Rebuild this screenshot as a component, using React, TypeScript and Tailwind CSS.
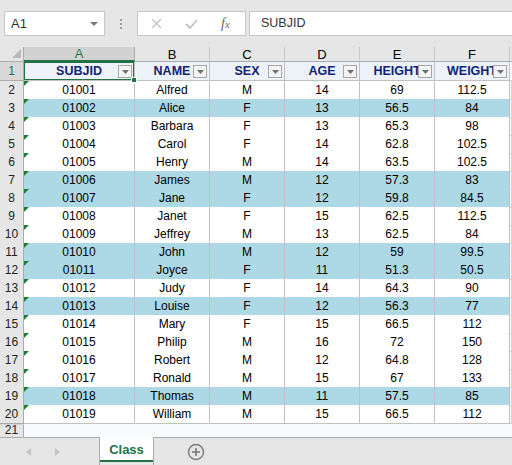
import { Fragment } from "react";

const rows: [string, string, string, string, string, string, boolean][] = [
  ["01001", "Alfred", "M", "14", "69", "112.5", false],
  ["01002", "Alice", "F", "13", "56.5", "84", true],
  ["01003", "Barbara", "F", "13", "65.3", "98", false],
  ["01004", "Carol", "F", "14", "62.8", "102.5", false],
  ["01005", "Henry", "M", "14", "63.5", "102.5", false],
  ["01006", "James", "M", "12", "57.3", "83", true],
  ["01007", "Jane", "F", "12", "59.8", "84.5", true],
  ["01008", "Janet", "F", "15", "62.5", "112.5", false],
  ["01009", "Jeffrey", "M", "13", "62.5", "84", false],
  ["01010", "John", "M", "12", "59", "99.5", true],
  ["01011", "Joyce", "F", "11", "51.3", "50.5", true],
  ["01012", "Judy", "F", "14", "64.3", "90", false],
  ["01013", "Louise", "F", "12", "56.3", "77", true],
  ["01014", "Mary", "F", "15", "66.5", "112", false],
  ["01015", "Philip", "M", "16", "72", "150", false],
  ["01016", "Robert", "M", "12", "64.8", "128", false],
  ["01017", "Ronald", "M", "15", "67", "133", false],
  ["01018", "Thomas", "M", "11", "57.5", "85", true],
  ["01019", "William", "M", "15", "66.5", "112", false],
];

const headers = ["SUBJID", "NAME", "SEX", "AGE", "HEIGHT", "WEIGHT"];
const letters = ["A", "B", "C", "D", "E", "F"];
const grid = "grid grid-cols-[24px_111px_75px_75px_75px_75px_75px_1fr]";

function FilterButton() {
  return (
    <div className="absolute right-[2px] top-[3px] z-10 flex h-[13px] w-[14px] items-center justify-center border border-[#a6a6a6] bg-[#f4f4f4]">
      <svg width="7" height="4" viewBox="0 0 7 4">
        <polygon points="0,0 7,0 3.5,4" fill="#707070" />
      </svg>
    </div>
  );
}

function TextFlag() {
  return (
    <svg className="absolute left-0 top-0" width="5" height="5" viewBox="0 0 5 5">
      <polygon points="0,0 5,0 0,5" fill="#1e7b34" />
    </svg>
  );
}

export default function App() {
  return (
    <div className="flex h-[465px] w-[512px] flex-col overflow-hidden bg-[#e6e6e6] font-['Liberation_Sans',Arial,sans-serif] text-[12px] text-black">
      {/* formula bar */}
      <div className="flex h-[47px] shrink-0 items-start pt-[11px] pl-[4px]">
        <div className="flex h-[25px] w-[101px] items-center justify-between border border-[#c6c6c6] bg-white pl-[6px] pr-[6px] text-[13px] text-[#333]">
          <span>A1</span>
          <svg width="8" height="4" viewBox="0 0 8 4">
            <polygon points="0,0 8,0 4,4" fill="#777" />
          </svg>
        </div>
        <div className="flex h-[25px] w-[32px] flex-col items-center justify-center gap-[2px]">
          <span className="h-[2px] w-[2px] bg-[#a0a0a0]" />
          <span className="h-[2px] w-[2px] bg-[#a0a0a0]" />
          <span className="h-[2px] w-[2px] bg-[#a0a0a0]" />
        </div>
        <div className="flex h-[25px] w-[109px] items-center border border-[#c6c6c6] bg-white">
          <svg className="ml-[13px]" width="11" height="11" viewBox="0 0 11 11">
            <path d="M1 1 L10 10 M10 1 L1 10" stroke="#c2c2c2" strokeWidth="1.4" />
          </svg>
          <svg className="ml-[23px]" width="13" height="10" viewBox="0 0 13 10">
            <path d="M1 5 L5 9 L12 1" stroke="#c2c2c2" strokeWidth="1.8" fill="none" />
          </svg>
          <span className="ml-[23px] font-['Liberation_Serif',serif] text-[14px] italic text-[#666]">
            f<span className="text-[11px]">x</span>
          </span>
        </div>
        <div className="ml-[3px] flex h-[25px] flex-1 items-center border border-r-0 border-[#c6c6c6] bg-white pl-[11px] text-[12.5px] text-[#333]">
          SUBJID
        </div>
      </div>

      {/* sheet */}
      <div className="flex flex-1 flex-col overflow-hidden bg-white">
        {/* column headers */}
        <div className={`${grid} h-[15px] shrink-0 bg-[#e6e6e6]`}>
          <div className="relative border-r border-b border-[#ababab]">
            <svg className="absolute right-[2px] bottom-[3px]" width="9" height="9" viewBox="0 0 9 9">
              <polygon points="9,0 9,9 0,9" fill="#b8b8b8" />
            </svg>
          </div>
          {letters.map((l, i) => (
            <div
              key={l}
              className={`flex items-center justify-center border-r leading-none ${
                i === 0
                  ? "border-[#ababab] border-b-2 border-b-[#217346] bg-[#d2d2d2] text-[#217346]"
                  : "border-[#c8c8c8] border-b border-b-[#ababab]"
              } text-[13px]`}
            >
              {l}
            </div>
          ))}
          <div className="border-b border-[#ababab]" />
          <div className="border-b border-[#ababab]" />
        </div>

        {/* row 1: headers */}
        <div className={`${grid} h-[19px] shrink-0`}>
          <div className="flex items-center justify-center border-r border-b border-[#ababab] bg-[#d8d8d8] text-[12px] text-[#217346]">
            1
          </div>
          {headers.map((h, i) => (
            <div
              key={h}
              className="relative flex items-center justify-center overflow-hidden border-r border-b border-[#c1c1c1] bg-[#edf2f9] text-[12.5px] font-bold text-[#112277]"
            >
              <span className="whitespace-nowrap">{h}</span>
              <FilterButton />
              {i === 0 && (
                <div className="absolute -left-[1px] -top-[1px] -right-[1px] -bottom-[1px] z-20 border-2 border-[#217346]" />
              )}
            </div>
          ))}
          <div className="border-b border-[#d4d4d4]" />
          <div className="border-b border-[#d4d4d4]" />
        </div>

        {/* data rows */}
        {rows.map((r, idx) => {
          const bg = r[6] ? "bg-[#add8e6]" : "bg-white";
          return (
            <div key={r[0]} className={`${grid} relative h-[18px] shrink-0`}>
              <div className="flex items-center justify-center border-r border-b border-[#ababab] bg-[#e6e6e6] text-[12px] text-[#222]">
                {idx + 2}
              </div>
              {r.slice(0, 6).map((v, i) => (
                <div
                  key={i}
                  className={`relative flex items-center justify-center border-r border-b border-[#c1c1c1] ${bg}`}
                >
                  {i === 0 && <TextFlag />}
                  {v}
                </div>
              ))}
              <div className="border-r border-b border-[#d4d4d4]" />
              <div className="border-b border-[#d4d4d4]" />
              {idx === 0 && (
                <div className="absolute left-[131px] -top-[4px] z-30 h-[6px] w-[6px] border border-white bg-[#217346]" />
              )}
            </div>
          );
        })}

        {/* row 21 */}
        <div className={`${grid} flex-1`}>
          <div className="flex items-center justify-center border-r border-[#ababab] bg-[#e6e6e6] text-[12px] leading-none text-[#222]">
            21
          </div>
          <div className="col-span-7 bg-[#f9fafd]" />
        </div>
      </div>

      {/* sheet tabs */}
      <div className="flex h-[28px] shrink-0 items-stretch bg-[#e6e6e6]">
        <div className="flex w-[99px] items-center border-t border-[#ababab] pl-[26px]">
          <svg width="5" height="8" viewBox="0 0 5 8">
            <polygon points="5,0 5,8 0,4" fill="#c4c4c4" />
          </svg>
          <svg className="ml-[24px]" width="5" height="8" viewBox="0 0 5 8">
            <polygon points="0,0 0,8 5,4" fill="#c4c4c4" />
          </svg>
        </div>
        <div className="flex w-[55px] flex-col border-x border-[#ababab]">
          <div className="flex h-[23px] items-center justify-center bg-white pt-[2px] text-[13px] font-bold text-[#217346]">
            Class
          </div>
          <div className="h-[2px] bg-[#217346]" />
        </div>
        <div className="flex flex-1 items-center border-t border-[#ababab] pl-[33px]">
          <svg width="18" height="18" viewBox="0 0 18 18">
            <circle cx="9" cy="9" r="7.5" stroke="#7a7a7a" strokeWidth="1.4" fill="none" />
            <path d="M9 5 V13 M5 9 H13" stroke="#7a7a7a" strokeWidth="1.6" />
          </svg>
        </div>
      </div>
    </div>
  );
}
